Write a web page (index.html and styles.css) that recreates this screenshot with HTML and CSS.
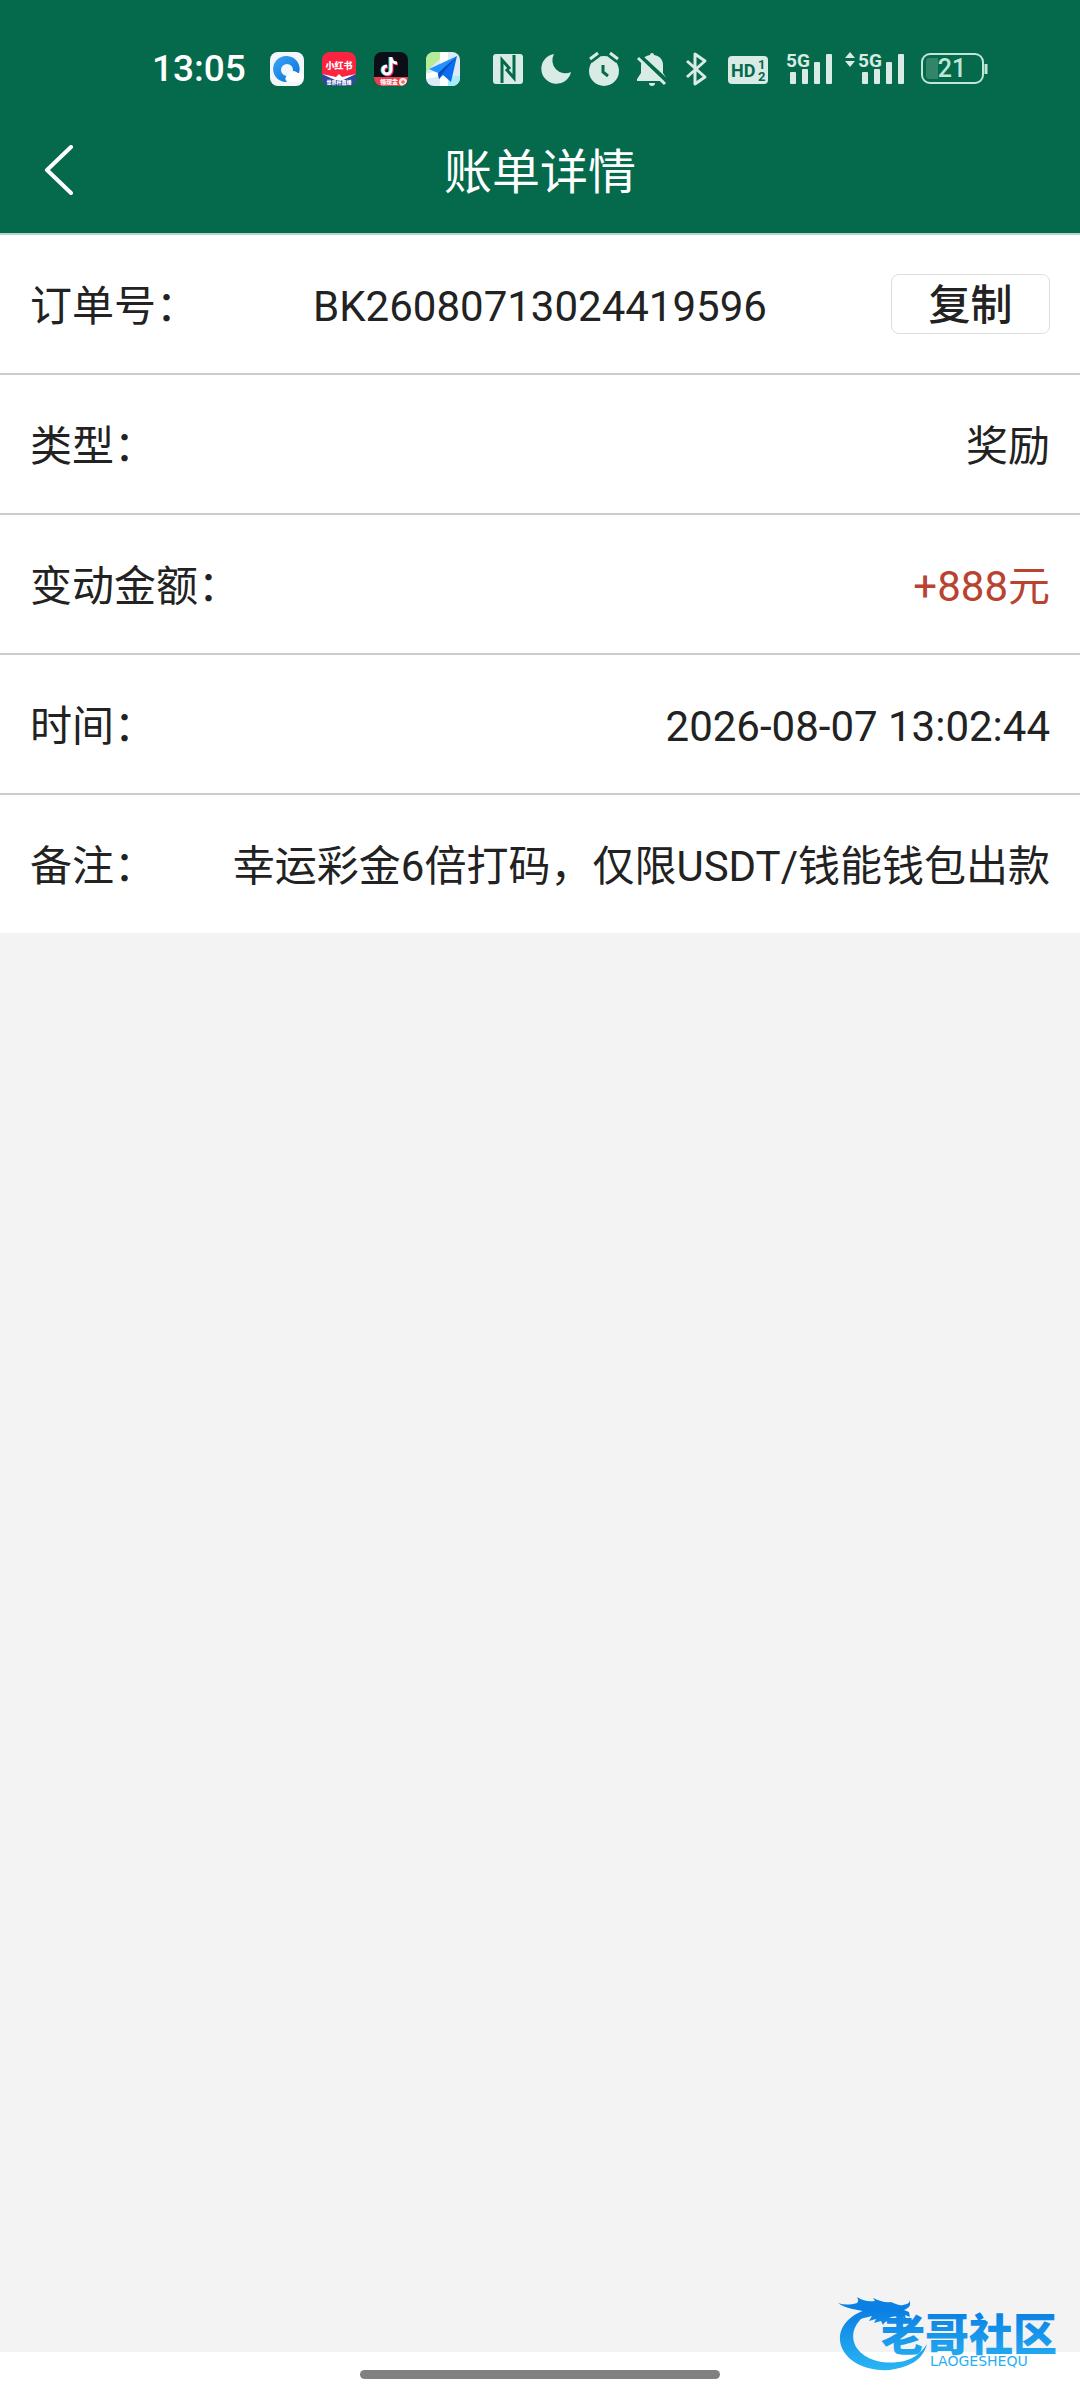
FILE: index.html
```html
<!DOCTYPE html>
<html lang="zh-CN">
<head>
<meta charset="utf-8">
<meta name="viewport" content="width=device-width, initial-scale=1">
<title>账单详情</title>
<link rel="stylesheet" href="styles.css">
</head>
<body>
<div class="page">
  <header class="header">
    <div class="status">
      <time class="clock">13:05</time>
      <div class="apps">
        <svg width="34" height="34" viewBox="0 0 34 34" aria-hidden="true">
          <defs><linearGradient id="ring" x1="0" y1="0" x2="1" y2="1"><stop offset="0" stop-color="#3aa5f5"/><stop offset="1" stop-color="#0a6fdc"/></linearGradient></defs>
          <rect width="34" height="34" rx="8" fill="#f3f7fa"/>
          <path d="M17 4a13 13 0 1 0 4 25l8-8A13 13 0 0 0 17 4zm0 8a6 6 0 1 1 0 12 6 6 0 0 1 0-12z" fill="url(#ring)" fill-rule="evenodd"/>
          <path d="M17 30a4 4 0 0 1 1-7 6 6 0 0 1 10-2 5 5 0 0 1 3 9z" fill="#fff"/>
        </svg>
        <svg width="34" height="34" viewBox="0 0 34 34" aria-hidden="true">
          <defs><clipPath id="tile"><rect width="34" height="34" rx="8"/></clipPath></defs>
          <g clip-path="url(#tile)">
            <rect width="34" height="34" fill="#fb233f"/>
            <path d="M0 22l17 5 17-5v12H0z" fill="#2b4a9c"/>
            <path d="M0 22l14 3 3-3 3 3 14-3-13 6h-8z" fill="#fff"/>
            <text class="tile-text" x="17" y="17" font-size="9">小红书</text>
            <text class="tile-text" x="17" y="32" font-size="5">世界杯直播</text>
          </g>
        </svg>
        <svg width="34" height="34" viewBox="0 0 34 34" aria-hidden="true">
          <g clip-path="url(#tile)">
            <rect width="34" height="34" fill="#0b0d17"/>
            <g fill="none" stroke-width="3">
              <path d="M17 5v13a4 4 0 1 1-4-4M17 5c0 4 3 6 6 6" stroke="#37e4e5" transform="translate(-1 0)"/>
              <path d="M18 6v13a4 4 0 1 1-4-4M18 6c0 4 3 6 6 6" stroke="#f5305c"/>
              <path d="M17 5v13a4 4 0 1 1-4-4M17 5c0 4 3 6 6 6" stroke="#fff"/>
            </g>
            <path d="M0 25h34v9H0z" fill="#e84250"/>
            <text class="tile-text" x="15" y="32" font-size="6">领现金</text>
            <circle cx="29" cy="30" r="4" fill="#ffe9dc"/>
            <path d="M27 30h4M29 28v4" stroke="#e84250"/>
          </g>
        </svg>
        <svg width="34" height="34" viewBox="0 0 34 34" aria-hidden="true">
          <g clip-path="url(#tile)">
            <rect width="34" height="34" fill="#dcebf6"/>
            <path d="M0 0h15v6L0 20z" fill="#b5ec98"/>
            <path d="M14 0h8v34h-8zM0 22l14-4v6L0 27z" fill="#fff"/>
            <path d="M22 24h12v10H22z" fill="#a9eef6"/>
            <path d="M31 4L3 17l9 4z" fill="#2291ff"/>
            <path d="M31 4L12 21l1 6 4-4 8 7z" fill="#0d6df0"/>
            <path d="M31 4L12 21l1 6 3-5z" fill="#0a4fc0"/>
          </g>
        </svg>
      </div>
      <div class="indicators">
        <svg width="30" height="34" viewBox="0 0 30 34" aria-hidden="true">
          <rect y="2" width="30" height="30" rx="3" fill="#d9ebe5"/>
          <path d="M9 31V8l8 9M21 3v23l-8-9" fill="none" stroke="#05694b" stroke-width="3"/>
        </svg>
        <svg width="30" height="34" viewBox="0 0 30 34" aria-hidden="true">
          <path d="M13 2A15 15 0 1 0 30 20 13 13 0 0 1 13 2z" fill="#d9ebe5"/>
        </svg>
        <svg width="30" height="34" viewBox="0 0 30 34" aria-hidden="true">
          <circle cx="15" cy="19" r="15" fill="#d9ebe5"/>
          <path d="M1 8l8-6M29 8l-8-6" stroke="#05694b" stroke-width="7"/>
          <path d="M1 7l8-6M29 7l-8-6" stroke="#d9ebe5" stroke-width="3"/>
          <path d="M14 13v7l5 4" fill="none" stroke="#05694b" stroke-width="3"/>
        </svg>
        <svg width="30" height="34" viewBox="0 0 30 34" aria-hidden="true">
          <path d="M13 3a2 2 0 0 1 4 0c6 1 9 5 9 10v8l4 6v2H0v-2l4-6v-8c0-5 3-9 9-10z" fill="#d9ebe5"/>
          <path d="M12 31h6a3 3 0 0 1-6 0z" fill="#d9ebe5"/>
          <path d="M3 4l28 26" stroke="#05694b" stroke-width="4"/>
          <path d="M1 6l27 26" stroke="#d9ebe5" stroke-width="3"/>
        </svg>
        <svg width="25" height="34" viewBox="0 0 25 34" aria-hidden="true">
          <path d="M2 9l18 16-10 7V2l10 7L2 25" fill="none" stroke="#d9ebe5" stroke-width="3" stroke-linejoin="round"/>
        </svg>
        <svg width="40" height="34" viewBox="0 0 40 34" aria-hidden="true">
          <rect y="4" width="40" height="28" rx="4" fill="#d9ebe5"/>
          <text class="hd-text" x="3" y="25" font-size="18">HD</text>
          <text class="hd-text" x="30" y="17" font-size="13">1</text>
          <text class="hd-text" x="30" y="29" font-size="13">2</text>
        </svg>
        <svg width="47" height="34" viewBox="0 0 47 34" aria-hidden="true">
          <text class="net-text" x="0" y="15">5G</text>
          <g fill="#d9ebe5"><rect x="4" y="20" width="6" height="12" rx="1"/><rect x="16" y="17" width="6" height="15" rx="1"/><rect x="28" y="10" width="6" height="22" rx="1"/><rect x="40" y="2" width="6" height="30" rx="1"/></g>
        </svg>
      </div>
      <div class="power">
        <svg width="60" height="34" viewBox="0 0 60 34" aria-hidden="true">
          <path d="M0 6l5-6 5 6zM0 9h10l-5 6z" fill="#d9ebe5"/>
          <text class="net-text" x="13" y="15">5G</text>
          <g fill="#d9ebe5"><rect x="17" y="20" width="6" height="12" rx="1"/><rect x="29" y="17" width="6" height="15" rx="1"/><rect x="41" y="10" width="6" height="22" rx="1"/><rect x="53" y="2" width="6" height="30" rx="1"/></g>
        </svg>
        <svg width="67" height="34" viewBox="0 0 67 34" role="img" aria-label="电量 21%">
          <rect x="1" y="2" width="61" height="29" rx="8" fill="none" stroke="#bfe6d6" stroke-width="2"/>
          <path d="M8 6h9v21H8a3 3 0 0 1-3-3V9a3 3 0 0 1 3-3z" fill="#338568"/>
          <path d="M65 12v10" stroke="#bfe6d6" stroke-width="3"/>
          <text class="battery-text" x="31" y="25">21</text>
        </svg>
      </div>
    </div>
    <nav class="nav">
      <button class="back" type="button" aria-label="返回">
        <svg width="30" height="50" viewBox="0 0 30 50" aria-hidden="true"><path d="M27 2L3 25l24 23" fill="none" stroke="#fff" stroke-width="4" stroke-linecap="round" stroke-linejoin="round"/></svg>
      </button>
      <h1 class="title">账单详情</h1>
    </nav>
  </header>
  <main class="content">
    <dl class="details">
      <div class="row order">
        <dt>订单号：</dt>
        <dd>BK26080713024419596</dd>
        <dd class="action"><button class="copy" type="button">复制</button></dd>
      </div>
      <div class="row"><dt>类型：</dt><dd>奖励</dd></div>
      <div class="row"><dt>变动金额：</dt><dd class="amount">+888元</dd></div>
      <div class="row"><dt>时间：</dt><dd>2026-08-07 13:02:44</dd></div>
      <div class="row"><dt>备注：</dt><dd>幸运彩金6倍打码，仅限USDT/钱能钱包出款</dd></div>
    </dl>
  </main>
  <footer class="gesture"><div class="pill"></div></footer>
  <svg class="watermark" width="226" height="80" viewBox="0 0 226 80" role="img" aria-label="老哥社区">
    <defs><linearGradient id="water" gradientUnits="userSpaceOnUse" x1="0" y1="0" x2="0" y2="80"><stop offset="0.2" stop-color="#0a7fe4"/><stop offset="1" stop-color="#2cb9f4"/></linearGradient></defs>
    <g fill="url(#water)">
      <path d="M34 14C8 20-3 38 4 54c8 19 39 28 64 18 11-4 18-11 21-22-7 11-17 17-29 18-21 3-40-6-44-20-4-13 6-27 24-34z"/>
      <path d="M0 9c6 2 12 2 19 0 2-2 1-4 0-6 6 4 12 5 18 4l-2-3c7 3 12 5 18 4 5 2 9 4 12 3 5-1 7-2 6-5 3 5 0 8-5 10l5 2 1 5-5-2 1 4c-6-3-12-3-17-1l4 4c-5-2-8-1-10 3l-2-4-7 2 2-4-7 2 3-5-12 3 7-7C18 15 8 15 0 9z"/>
      <text class="mark-name" x="43" y="57">老哥社区</text>
      <text class="mark-latin" x="92" y="72">LAOGESHEQU</text>
    </g>
  </svg>
</div>
</body>
</html>
```
FILE: styles.css
```css
* { box-sizing: border-box; }

body {
  margin: 0;
  color: #222;
  font-family: Roboto, "Noto Sans CJK SC", sans-serif;
  font-size: 42px;
  line-height: 60px;
}

button {
  padding: 0;
  color: inherit;
  font: inherit;
  background: none;
  border: 0;
}

.page {
  position: relative;
  display: flex;
  flex-direction: column;
  min-height: 100vh;
  background: #f3f3f3;
}

.header {
  color: #fff;
  background: #05694b;
  border-bottom: 2px solid #b4d5ca;
}

.status {
  display: flex;
  align-items: center;
  height: 104px;
  padding: 34px 90px 0 152px;
}

.status svg { display: block; flex: none; overflow: visible; }

.clock {
  width: 118px;
  font-size: 37px;
  font-weight: 500;
  line-height: 40px;
}

.apps, .indicators, .power {
  display: flex;
  align-items: center;
}

.apps { gap: 18px; margin-right: 33px; }
.indicators { gap: 18px; margin-right: 12px; }
.power { gap: 16px; }

.tile-text {
  fill: #fff;
  font-family: "Noto Sans CJK SC", sans-serif;
  font-weight: 900;
  text-anchor: middle;
}

.hd-text { fill: #05694b; font-family: Roboto, sans-serif; font-weight: 700; }
.net-text { fill: #d9ebe5; font-family: Roboto, sans-serif; font-size: 19px; font-weight: 700; }
.battery-text { fill: #bfe6d6; font-family: Roboto, sans-serif; font-size: 25px; font-weight: 500; text-anchor: middle; }

.nav {
  display: grid;
  grid-template-columns: 1fr auto 1fr;
  align-items: center;
  height: 129px;
  padding: 2px 30px 0;
}

.back {
  display: flex;
  align-items: center;
  justify-content: center;
  width: 58px;
  height: 80px;
}

.title {
  margin: 0;
  padding-top: 6px;
  font-size: 48px;
  font-weight: 400;
  line-height: 64px;
}

.content { flex: 1; }

.details { margin: 0; background: #fff; }

.row {
  display: flex;
  align-items: center;
  justify-content: space-between;
  height: 140px;
  padding: 0 30px;
  border-bottom: 2px solid #ccc;
}

.row:last-child { height: 138px; border-bottom: 0; }
.row dt, .row dd { margin: 0; padding-top: 5px; }
.row .amount { color: #b94230; }

.order { display: grid; grid-template-columns: 1fr auto 1fr; }
.order .action { justify-self: end; padding-top: 0; }

.copy {
  display: block;
  width: 159px;
  height: 60px;
  padding-top: 4px;
  font-weight: 500;
  line-height: 54px;
  border: 1px solid #ddd;
  border-radius: 8px;
}

.gesture {
  display: flex;
  align-items: center;
  justify-content: center;
  height: 48px;
  padding-bottom: 3px;
  background: #fff;
}

.pill {
  width: 33.333%;
  height: 9px;
  background: #808080;
  border-radius: 5px;
}

.watermark {
  position: absolute;
  right: 16px;
  bottom: 26px;
}

.mark-name { font-family: "Noto Sans CJK SC", sans-serif; font-size: 44px; font-weight: 900; }
.mark-latin { font-family: "DejaVu Sans", sans-serif; font-size: 14px; }
```
